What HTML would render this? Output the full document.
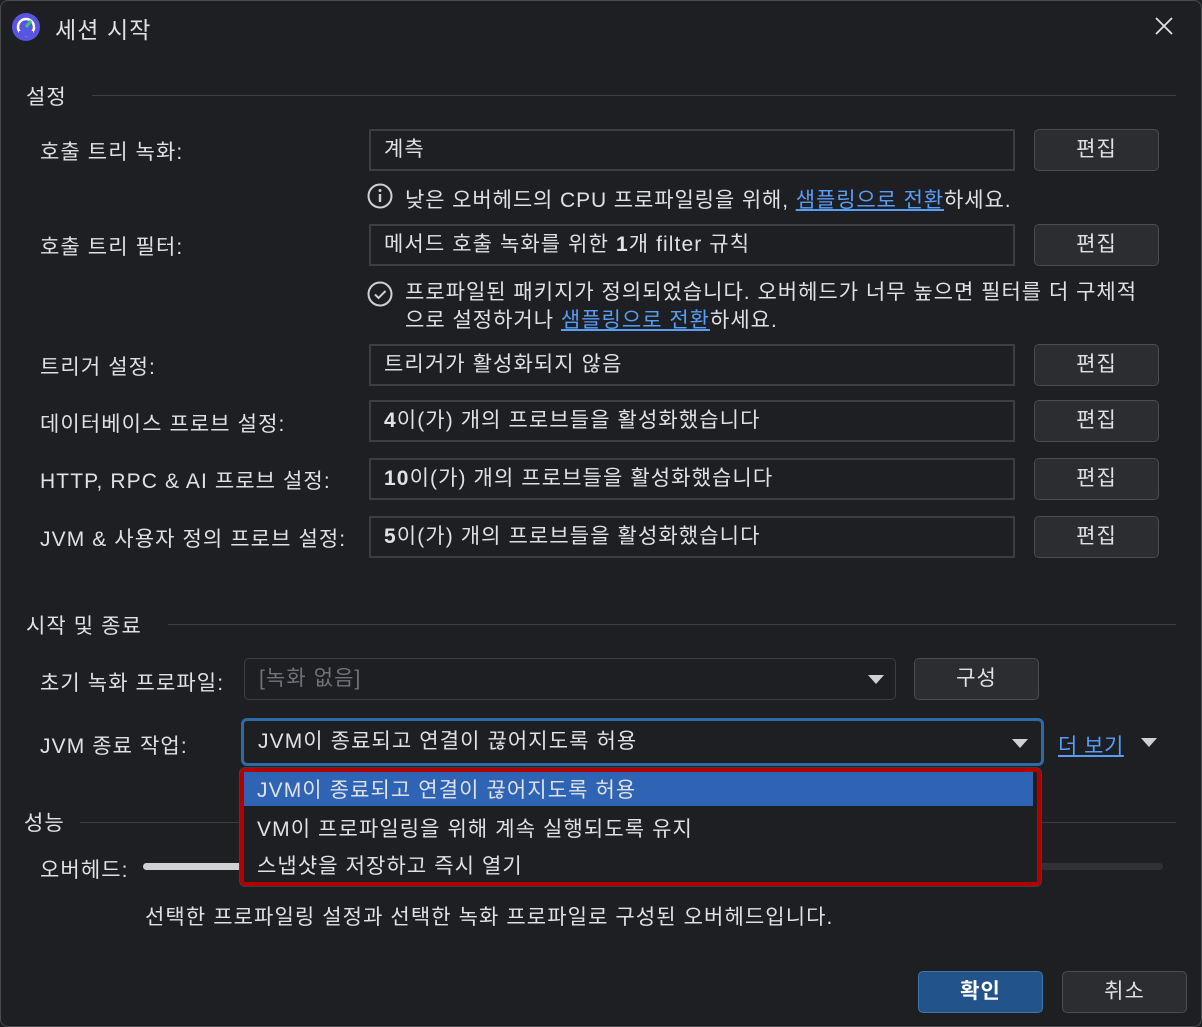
<!DOCTYPE html>
<html><head><meta charset="utf-8"><style>
*{box-sizing:border-box;margin:0;padding:0}
body{width:1202px;height:1027px;background:#1e1f22;font-family:"Liberation Sans","Noto Sans CJK KR",sans-serif;color:#dfe1e5;font-size:21px;letter-spacing:1.1px;position:relative;overflow:hidden}
.a{position:absolute;white-space:nowrap}
.frame{position:absolute;left:0;top:0;width:1202px;height:1027px;border:1px solid #4a4b4f;border-radius:8px}
.sec{position:absolute;height:1px;background:#3c3e42}
.tf{position:absolute;left:369px;width:646px;height:42px;border:2px solid #3c3e42;padding-left:13px;line-height:38px;background:#1e1f22}
.btn{position:absolute;left:1034px;width:125px;height:42px;border:1px solid #4a4c50;border-radius:5px;background:#2b2d30;text-align:center;line-height:40px}
.lbl{position:absolute;left:40px}
.lk{color:#589df6;text-decoration:underline}
.tri{position:absolute;width:0;height:0;border-left:8px solid transparent;border-right:8px solid transparent;border-top:9px solid #cfd1d4}
</style></head><body>
<div class="frame"></div>
<svg class="a" style="left:12px;top:13px" width="28" height="28" viewBox="0 0 28 28"><circle cx="14" cy="14" r="14" fill="#5a55e0"/><circle cx="14" cy="14" r="8" fill="none" stroke="#fff" stroke-width="2.5"/><path d="M14 14 L19 8" stroke="#2ecc71" stroke-width="3"/><rect x="7" y="18" width="14" height="5" fill="#5a55e0"/></svg>
<div class="a" style="left:55px;top:11px;font-size:23px">세션 시작</div>
<svg class="a" style="left:1154px;top:16px" width="20" height="20"><path d="M2 2L18 18M18 2L2 18" stroke="#dfe1e5" stroke-width="1.8"/></svg>

<div class="a" style="left:26px;top:81px">설정</div><div class="sec" style="left:92px;top:95px;width:1084px"></div>
<div class="lbl a" style="top:136px">호출 트리 녹화:</div>
<div class="tf" style="top:129px">계측</div><div class="btn" style="top:129px">편집</div>
<svg class="a" style="left:367px;top:183px" width="28" height="28"><circle cx="13" cy="13" r="11.5" fill="none" stroke="#cfd1d4" stroke-width="2"/><rect x="11.8" y="11" width="2.4" height="8" fill="#cfd1d4"/><circle cx="13" cy="7.5" r="1.5" fill="#cfd1d4"/></svg>
<div class="a" style="left:405px;top:184px;letter-spacing:0.9px">낮은 오버헤드의 CPU 프로파일링을 위해, <span class="lk">샘플링으로 전환</span>하세요.</div>
<div class="lbl a" style="top:231px">호출 트리 필터:</div>
<div class="tf" style="top:224px">메서드 호출 녹화를 위한 <b>1</b>개 filter 규칙</div><div class="btn" style="top:224px">편집</div>
<svg class="a" style="left:367px;top:281px" width="28" height="28"><circle cx="13" cy="13" r="11.5" fill="none" stroke="#cfd1d4" stroke-width="2"/><path d="M8 13.5l3.5 3.5 7-7" fill="none" stroke="#cfd1d4" stroke-width="2"/></svg>
<div class="a" style="left:405px;top:279px;line-height:28px;letter-spacing:1px">프로파일된 패키지가 정의되었습니다. 오버헤드가 너무 높으면 필터를 더 구체적<br>으로 설정하거나 <span class="lk">샘플링으로 전환</span>하세요.</div>
<div class="lbl a" style="top:351px">트리거 설정:</div>
<div class="tf" style="top:344px">트리거가 활성화되지 않음</div><div class="btn" style="top:344px">편집</div>
<div class="lbl a" style="top:408px">데이터베이스 프로브 설정:</div>
<div class="tf" style="top:400px"><b>4</b>이(가) 개의 프로브들을 활성화했습니다</div><div class="btn" style="top:400px">편집</div>
<div class="lbl a" style="top:465px">HTTP, RPC &amp; AI 프로브 설정:</div>
<div class="tf" style="top:458px"><b>10</b>이(가) 개의 프로브들을 활성화했습니다</div><div class="btn" style="top:458px">편집</div>
<div class="lbl a" style="top:523px">JVM &amp; 사용자 정의 프로브 설정:</div>
<div class="tf" style="top:516px"><b>5</b>이(가) 개의 프로브들을 활성화했습니다</div><div class="btn" style="top:516px">편집</div>

<div class="a" style="left:26px;top:610px">시작 및 종료</div><div class="sec" style="left:168px;top:624px;width:1008px"></div>
<div class="lbl a" style="top:667px">초기 녹화 프로파일:</div>
<div class="a" style="left:244px;top:658px;width:652px;height:42px;border:1px solid #3c3e42;border-radius:5px;padding-left:14px;line-height:40px;color:#6f7378">[녹화 없음]</div>
<div class="tri" style="left:868px;top:675px"></div>
<div class="btn" style="left:914px;top:658px">구성</div>
<div class="lbl a" style="top:730px">JVM 종료 작업:</div>
<div class="a" style="left:241px;top:718px;width:803px;height:48px;border:3px solid #2f6aa8;border-radius:6px;padding-left:14px;line-height:42px;background:#1e1f22">JVM이 종료되고 연결이 끊어지도록 허용</div>
<div class="tri" style="left:1012px;top:739px"></div>
<div class="a lk" style="left:1058px;top:730px;letter-spacing:0.5px">더 보기</div>
<div class="tri" style="left:1141px;top:738px"></div>

<div class="a" style="left:24px;top:807px">성능</div><div class="sec" style="left:80px;top:822px;width:1096px"></div>
<div class="lbl a" style="top:854px">오버헤드:</div>
<div class="a" style="left:143px;top:863px;width:1020px;height:7px;border-radius:4px;background:#2f3134"></div>
<div class="a" style="left:143px;top:863px;width:120px;height:7px;border-radius:4px;background:#cfd1d4"></div>
<div class="a" style="left:145px;top:901px">선택한 프로파일링 설정과 선택한 녹화 프로파일로 구성된 오버헤드입니다.</div>

<div class="a" style="left:240px;top:768px;width:801px;height:118px;border:4px solid #b00000;border-radius:5px;background:#1e1f22;box-shadow:0 0 0 1px #3c3e42"></div>
<div class="a" style="left:244px;top:772px;width:789px;height:34px;background:#2f64b5"></div>
<div class="a" style="left:257px;top:774px">JVM이 종료되고 연결이 끊어지도록 허용</div>
<div class="a" style="left:257px;top:813px">VM이 프로파일링을 위해 계속 실행되도록 유지</div>
<div class="a" style="left:257px;top:850px">스냅샷을 저장하고 즉시 열기</div>

<div class="a" style="left:918px;top:971px;width:125px;height:42px;border:1px solid #3b76b0;border-radius:5px;background:#22538a;text-align:center;line-height:40px;font-weight:bold;color:#fff">확인</div>
<div class="btn" style="left:1062px;top:971px">취소</div>
</body></html>
